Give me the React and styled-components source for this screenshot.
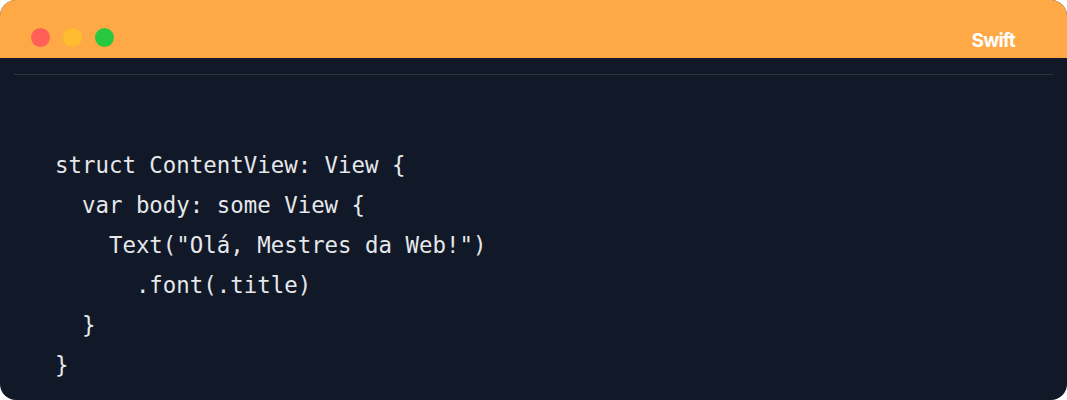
import React from 'react'
import styled, { createGlobalStyle } from 'styled-components'

const GlobalStyle = createGlobalStyle`
  html, body {
    margin: 0;
    padding: 0;
    background: #ffffff;
  }
`

const Janela = styled.div`
  width: 1067px;
  height: 400px;
  border-radius: 16px;
  overflow: hidden;
  background: #111827;
  display: flex;
  flex-direction: column;
`

const Cabecalho = styled.div`
  height: 58px;
  background: #fea946;
  display: flex;
  align-items: center;
  justify-content: space-between;
  padding: 16px 52px 0 31px;
  box-sizing: border-box;
`

const Botoes = styled.div`
  display: flex;
  gap: 13px;
`

const Bolinha = styled.span`
  width: 19px;
  height: 19px;
  border-radius: 50%;
  background: ${(p) => p.cor};
`

const Linguagem = styled.span`
  font-family: Inter, "Liberation Sans", sans-serif;
  font-weight: 700;
  font-size: 19px;
  letter-spacing: -0.8px;
  color: #ffffff;
  margin-top: 6px;
`

const Separador = styled.div`
  height: 1px;
  background: #2e3441;
  margin: 16px 14px 0 14px;
`

const Codigo = styled.pre`
  margin: 70px 0 0 0;
  padding: 0 0 0 55px;
  font-family: "DejaVu Sans Mono", monospace;
  font-size: 22.4px;
  line-height: 40px;
  color: #e5e7eb;
`

const linhas = [
  'struct ContentView: View {',
  '  var body: some View {',
  '    Text("Olá, Mestres da Web!")',
  '      .font(.title)',
  '  }',
  '}',
]

export default function App() {
  return (
    <>
      <GlobalStyle />
      <Janela>
        <Cabecalho>
          <Botoes>
            <Bolinha cor="#ff5f57" />
            <Bolinha cor="#febc2e" />
            <Bolinha cor="#28c840" />
          </Botoes>
          <Linguagem>Swift</Linguagem>
        </Cabecalho>
        <Separador />
        <Codigo>{linhas.join('\n')}</Codigo>
      </Janela>
    </>
  )
}
